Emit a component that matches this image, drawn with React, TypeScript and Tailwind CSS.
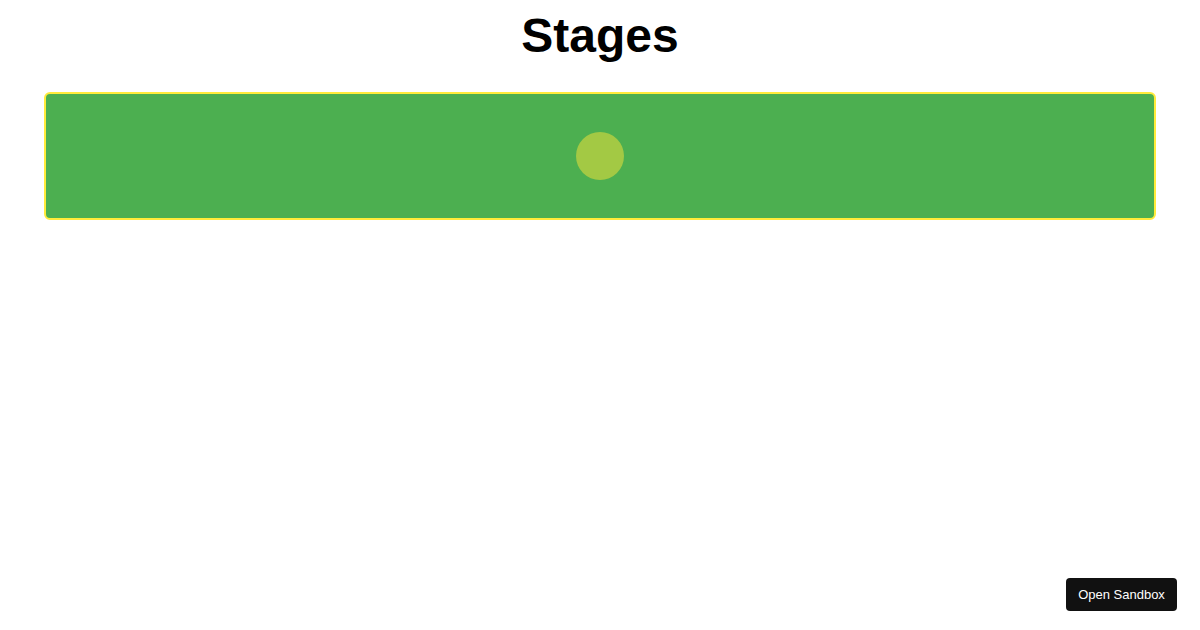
export default function App() {
  return (
    <div className="min-h-[630px] bg-white px-[44px] pt-[12px] font-['Liberation_Sans',Arial,sans-serif]">
      <h1 className="text-center text-[48px] font-bold leading-[48px] text-black">Stages</h1>
      <div className="mt-[32px] flex h-[128px] items-center justify-center rounded-[6px] border-2 border-[#ffeb3b] bg-[#4caf50]">
        <div className="h-[48px] w-[48px] rounded-full bg-[#a3c944]" />
      </div>
      <button className="fixed bottom-[19px] right-[23px] h-[33px] w-[111px] rounded-[4px] bg-[#111111] text-[13px] text-white font-['Liberation_Sans',Arial,sans-serif]">
        Open Sandbox
      </button>
    </div>
  );
}
